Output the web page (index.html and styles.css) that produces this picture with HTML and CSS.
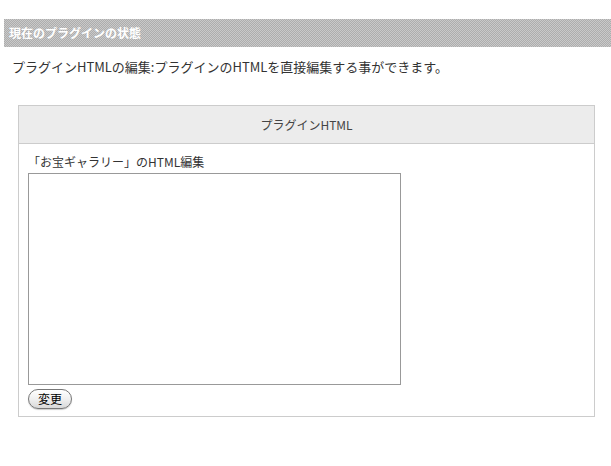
FILE: index.html
```html
<!DOCTYPE html>
<html lang="ja">
<head>
    <meta charset="UTF-8">
    <title>プラグインHTML</title>
    <link rel="stylesheet" href="styles.css">
</head>
<body>
<div id="wrapper">
    <h2 class="section-title">現在のプラグインの状態</h2>
    <p class="lead">プラグインHTMLの編集:プラグインのHTMLを直接編集する事ができます。</p>

    <div class="plugin-box">
        <div class="plugin-head">プラグインHTML</div>
        <form class="plugin-body">
            <div class="plugin-label">「お宝ギャラリー」のHTML編集</div>
            <textarea class="plugin-html"></textarea>
            <div><button type="button" class="change-button">変更</button></div>
        </form>
    </div>
</div>
</body>
</html>
```

FILE: styles.css
```css
        body {
            font-family: "Noto Sans CJK JP", "Liberation Sans", sans-serif;
            background-color: #ffffff;
            color: #333333;
            margin: 0;
            padding: 0;
        }
        #wrapper {
            padding: 19px 0 0 4px;
        }
        .section-title {
            margin: 0;
            height: 28px;
            line-height: 28px;
            padding-left: 5px;
            font-size: 12px;
            font-weight: bold;
            color: #ffffff;
            background-color: #bcbcbc;
            background-image: repeating-conic-gradient(#c9c9c9 0 25%, #adadad 0 50%);
            background-size: 2px 2px;
        }
        .lead {
            margin: 10px 0 0 8px;
            font-size: 13px;
            line-height: 20px;
            color: #333333;
        }
        .plugin-box {
            margin: 28px 0 0 14px;
            width: 575px;
            border: 1px solid #cccccc;
        }
        .plugin-head {
            height: 37px;
            line-height: 37px;
            text-align: center;
            background: #ececec;
            border-bottom: 1px solid #cccccc;
            font-size: 12px;
            color: #444444;
        }
        .plugin-body {
            padding: 8px 0 7px 9px;
            margin: 0;
        }
        .plugin-label {
            font-size: 12px;
            line-height: 20px;
            color: #333333;
        }
        .plugin-html {
            display: block;
            box-sizing: border-box;
            width: 373px;
            height: 212px;
            margin: 1px 0 0 0;
            border: 1px solid #999999;
            resize: none;
        }
        .change-button {
            margin-top: 1px;
            width: 44px;
            height: 20px;
            padding: 0;
            font-family: "Noto Sans CJK JP", sans-serif;
            font-size: 12px;
            line-height: 16px;
            color: #000000;
            border: 1px solid #777777;
            border-radius: 10px;
            background: linear-gradient(180deg, #ffffff 0%, #f0f0f0 50%, #d8d8d8 100%);
            box-shadow: 0 1px 1px rgba(0,0,0,0.2);
        }
```
